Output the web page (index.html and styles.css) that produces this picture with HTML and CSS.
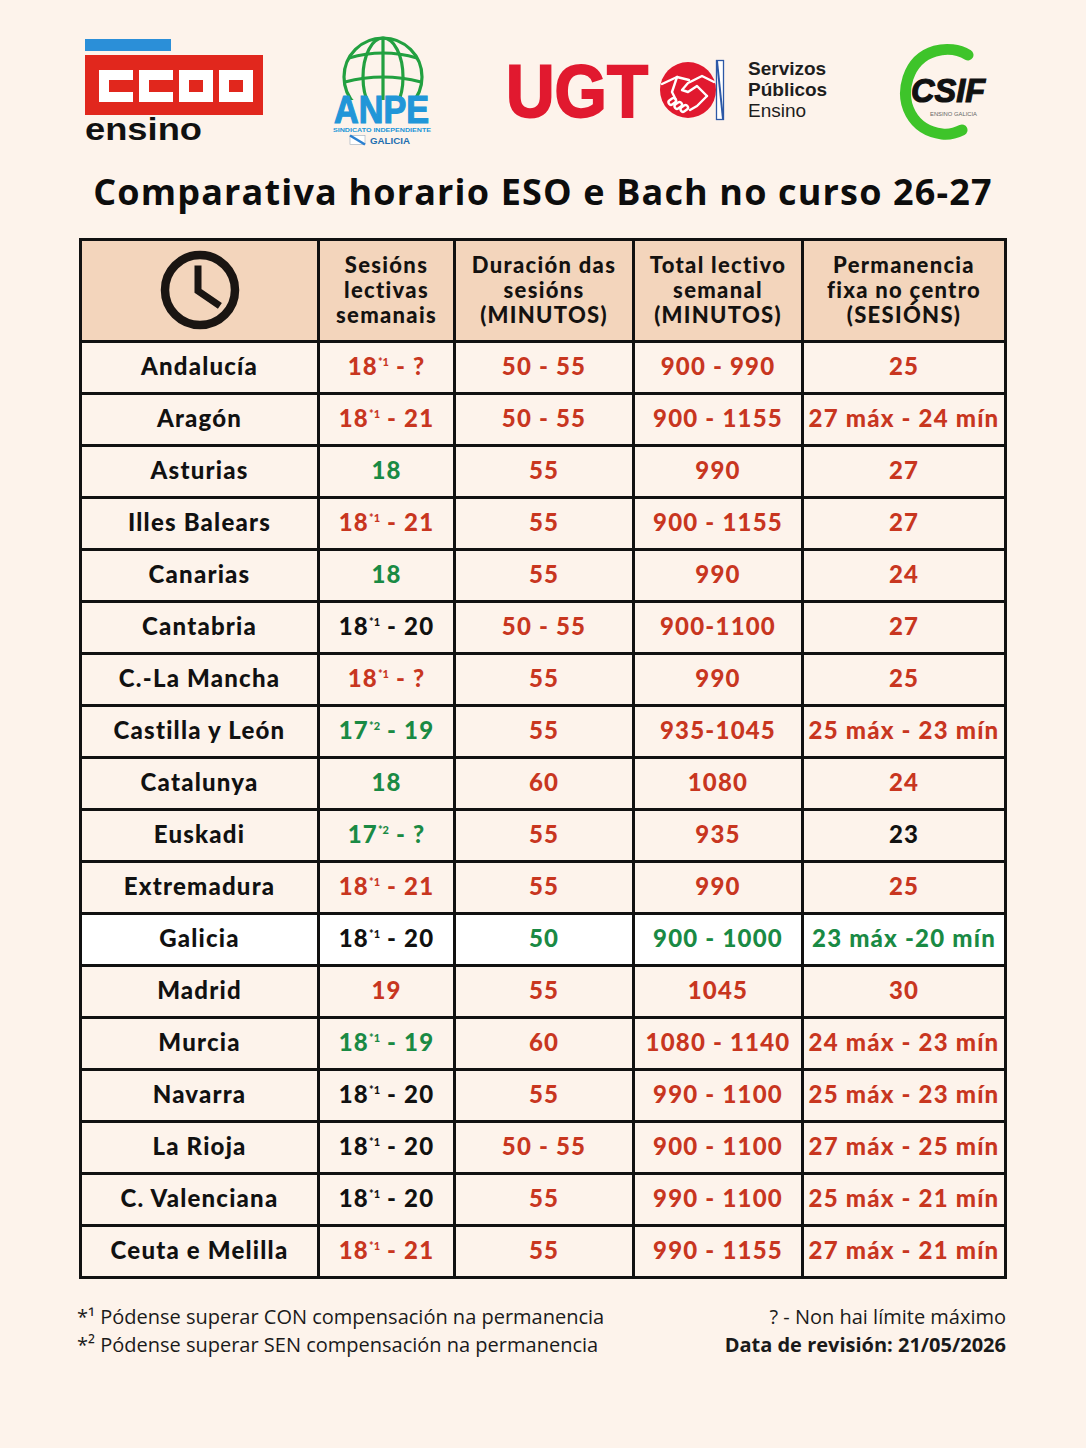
FILE: index.html
```html
<!DOCTYPE html>
<html lang="gl">
<head>
<meta charset="utf-8">
<title>Comparativa horario ESO e Bach no curso 26-27</title>
<link rel="stylesheet" href="styles.css">
</head>
<body>
<header class="logos">
  <svg class="logo logo-ccoo" width="180" height="120" viewBox="85 30 180 120" aria-label="CCOO ensino">
    <rect x="85" y="39" width="86" height="12" fill="#2b8fd8"/>
    <rect x="85" y="55" width="178" height="60" fill="#e1271d"/>
    <g fill="#fff">
      <path d="M99 70 h34 v10 h-24 v12 h24 v10 h-34 z"/>
      <path d="M139 70 h34 v10 h-24 v12 h24 v10 h-34 z"/>
      <path d="M179 70 h34 v32 h-34 z M189 80 v12 h14 v-12 z" fill-rule="evenodd"/>
      <path d="M219 70 h34 v32 h-34 z M229 80 v12 h14 v-12 z" fill-rule="evenodd"/>
    </g>
    <text x="85" y="140" class="t-ensino" textLength="117" lengthAdjust="spacingAndGlyphs">ensino</text>
  </svg>

  <svg class="logo logo-anpe" width="106" height="120" viewBox="328 30 106 120" aria-label="ANPE Galicia">
    <g fill="none" stroke="#22a040" stroke-width="3.2">
      <circle cx="383" cy="77" r="39"/>
      <ellipse cx="383" cy="77" rx="20" ry="39"/>
      <line x1="383" y1="38" x2="383" y2="116"/>
      <path d="M349 58 Q383 48 417 58"/>
      <path d="M345 82 Q383 72 421 82"/>
    </g>
    <rect x="328" y="100" width="106" height="50" fill="#fdf3eb"/>
    <text x="334" y="123" class="t-anpe" textLength="95" lengthAdjust="spacingAndGlyphs">ANPE</text>
    <text x="333" y="132" class="t-sind" textLength="98" lengthAdjust="spacingAndGlyphs">SINDICATO INDEPENDIENTE</text>
    <rect x="350" y="135.5" width="15" height="9" fill="#fff" stroke="#9ab" stroke-width="0.6"/>
    <path d="M350 135.5 L365 144.5" stroke="#2a7fd0" stroke-width="2.5"/>
    <text x="370" y="144" class="t-gal" textLength="40" lengthAdjust="spacingAndGlyphs">GALICIA</text>
  </svg>

  <svg class="logo logo-ugt" width="322" height="120" viewBox="505 30 322 120" aria-label="UGT Servizos Públicos Ensino">
    <text x="506" y="117" class="t-ugt" textLength="142" lengthAdjust="spacingAndGlyphs">UGT</text>
    <circle cx="688" cy="90" r="28" fill="#e1192f"/>
    <g fill="none" stroke="#fff" stroke-width="2.4" stroke-linecap="round" stroke-linejoin="round">
      <path d="M662 84 L677 77 L689 80"/>
      <path d="M714 82 L702 76 L688 83 L682 90 L688 92 L697 86 L707 96"/>
      <path d="M677 77 L672 92 L676 100"/>
      <path d="M707 96 L697 106 L690 110"/>
      <rect x="668" y="99" width="8" height="5" rx="2.5" transform="rotate(-35 672 101)"/>
      <rect x="674" y="103" width="8" height="5" rx="2.5" transform="rotate(-35 678 105)"/>
      <rect x="680" y="106" width="8" height="5" rx="2.5" transform="rotate(-35 684 108)"/>
    </g>
    <rect x="716.5" y="60.5" width="7" height="59" fill="#fff" stroke="#2c58a6" stroke-width="1.3"/>
    <path d="M717 61 L723 119" stroke="#2c58a6" stroke-width="2"/>
    <text x="748" y="75" class="t-sp b">Servizos</text>
    <text x="748" y="96" class="t-sp b">Públicos</text>
    <text x="748" y="117" class="t-sp">Ensino</text>
  </svg>

  <svg class="logo logo-csif" width="106" height="120" viewBox="896 30 106 120" aria-label="CSIF Ensino Galicia">
    <path d="M968 55 C950 44 918 48 908 78 C900 103 912 130 942 134 C950 135 956 133 962 130" fill="none" stroke="#3ec42a" stroke-width="11" stroke-linecap="round"/>
    <text x="911" y="102" class="t-csif" textLength="74" lengthAdjust="spacingAndGlyphs">CSIF</text>
    <text x="930" y="116" class="t-csifsub" textLength="47" lengthAdjust="spacingAndGlyphs">ENSINO GALICIA</text>
  </svg>
</header>

<h1 class="title">Comparativa horario ESO e Bach no curso 26-27</h1>

<table class="grid">
  <colgroup>
    <col class="c1"><col class="c2"><col class="c3"><col class="c4"><col class="c5">
  </colgroup>
  <thead>
    <tr>
      <th class="clock-cell">
        <svg width="82" height="82" viewBox="0 0 82 82" aria-hidden="true">
          <circle cx="41" cy="41" r="35" fill="none" stroke="#1a1512" stroke-width="8.5"/>
          <path d="M39 20 V42 L58 55" fill="none" stroke="#1a1512" stroke-width="7" stroke-linecap="square"/>
        </svg>
      </th>
      <th>Sesións<br>lectivas<br>semanais</th>
      <th>Duración das<br>sesións<br>(MINUTOS)</th>
      <th>Total lectivo<br>semanal<br>(MINUTOS)</th>
      <th>Permanencia<br>fixa no çentro<br>(SESIÓNS)</th>
    </tr>
  </thead>
  <tbody>
    <tr><td>Andalucía</td><td class="r">18<sup>*1</sup> - ?</td><td class="r">50 - 55</td><td class="r">900 - 990</td><td class="r">25</td></tr>
    <tr><td>Aragón</td><td class="r">18<sup>*1</sup> - 21</td><td class="r">50 - 55</td><td class="r">900 - 1155</td><td class="r">27 máx - 24 mín</td></tr>
    <tr><td>Asturias</td><td class="g">18</td><td class="r">55</td><td class="r">990</td><td class="r">27</td></tr>
    <tr><td>Illes Balears</td><td class="r">18<sup>*1</sup> - 21</td><td class="r">55</td><td class="r">900 - 1155</td><td class="r">27</td></tr>
    <tr><td>Canarias</td><td class="g">18</td><td class="r">55</td><td class="r">990</td><td class="r">24</td></tr>
    <tr><td>Cantabria</td><td>18<sup>*1</sup> - 20</td><td class="r">50 - 55</td><td class="r">900-1100</td><td class="r">27</td></tr>
    <tr><td>C.-La Mancha</td><td class="r">18<sup>*1</sup> - ?</td><td class="r">55</td><td class="r">990</td><td class="r">25</td></tr>
    <tr><td>Castilla y León</td><td class="g">17<sup>*2</sup> - 19</td><td class="r">55</td><td class="r">935-1045</td><td class="r">25 máx - 23 mín</td></tr>
    <tr><td>Catalunya</td><td class="g">18</td><td class="r">60</td><td class="r">1080</td><td class="r">24</td></tr>
    <tr><td>Euskadi</td><td class="g">17<sup>*2</sup> - ?</td><td class="r">55</td><td class="r">935</td><td>23</td></tr>
    <tr><td>Extremadura</td><td class="r">18<sup>*1</sup> - 21</td><td class="r">55</td><td class="r">990</td><td class="r">25</td></tr>
    <tr class="hl"><td>Galicia</td><td>18<sup>*1</sup> - 20</td><td class="g">50</td><td class="g">900 - 1000</td><td class="g">23 máx -20 mín</td></tr>
    <tr><td>Madrid</td><td class="r">19</td><td class="r">55</td><td class="r">1045</td><td class="r">30</td></tr>
    <tr><td>Murcia</td><td class="g">18<sup>*1</sup> - 19</td><td class="r">60</td><td class="r">1080 - 1140</td><td class="r">24 máx - 23 mín</td></tr>
    <tr><td>Navarra</td><td>18<sup>*1</sup> - 20</td><td class="r">55</td><td class="r">990 - 1100</td><td class="r">25 máx - 23 mín</td></tr>
    <tr><td>La Rioja</td><td>18<sup>*1</sup> - 20</td><td class="r">50 - 55</td><td class="r">900 - 1100</td><td class="r">27 máx - 25 mín</td></tr>
    <tr><td>C. Valenciana</td><td>18<sup>*1</sup> - 20</td><td class="r">55</td><td class="r">990 - 1100</td><td class="r">25 máx - 21 mín</td></tr>
    <tr><td>Ceuta e Melilla</td><td class="r">18<sup>*1</sup> - 21</td><td class="r">55</td><td class="r">990 - 1155</td><td class="r">27 máx - 21 mín</td></tr>
  </tbody>
</table>

<footer class="notes">
  <div class="notes-left">
    <p>*¹ Pódense superar CON compensación na permanencia</p>
    <p>*² Pódense superar SEN compensación na permanencia</p>
  </div>
  <div class="notes-right">
    <p>? - Non hai límite máximo</p>
    <p class="bold">Data de revisión: 21/05/2026</p>
  </div>
</footer>
</body>
</html>
```

FILE: styles.css
```css
* { box-sizing: border-box; }

html, body {
  margin: 0;
  padding: 0;
  background: #fdf3eb;
}

body {
  width: 1086px;
  min-height: 1448px;
  font-family: "Lato", "Noto Sans", sans-serif;
  color: #121212;
}

.logos {
  display: flex;
  align-items: flex-start;
  height: 150px;
  padding-top: 30px;
}

.logo { display: block; flex: none; }
.logo-ccoo { margin-left: 85px; }
.logo-anpe { margin-left: 63px; }
.logo-ugt { margin-left: 71px; }
.logo-csif { margin-left: 69px; }

.t-ensino {
  font-family: "Liberation Sans", Arial, sans-serif;
  font-weight: 700;
  font-size: 31px;
  fill: #111;
}
.t-anpe {
  font-family: "Liberation Sans", Arial, sans-serif;
  font-weight: 700;
  font-size: 38px;
  fill: #2196d8;
  stroke: #2196d8;
  stroke-width: 1.2px;
}
.t-sind {
  font-family: "Liberation Sans", Arial, sans-serif;
  font-weight: 700;
  font-size: 6px;
  fill: #2196d8;
}
.t-gal {
  font-family: "Liberation Sans", Arial, sans-serif;
  font-weight: 700;
  font-size: 9px;
  fill: #1e6fb0;
}
.t-ugt {
  font-family: "Liberation Sans", Arial, sans-serif;
  font-weight: 700;
  font-size: 74px;
  fill: #e1192f;
  stroke: #e1192f;
  stroke-width: 2px;
}
.t-sp {
  font-family: "Liberation Sans", Arial, sans-serif;
  font-size: 19px;
  fill: #1d1d1d;
}
.t-sp.b { font-weight: 700; }
.t-csif {
  font-family: "Liberation Sans", Arial, sans-serif;
  font-weight: 700;
  font-style: italic;
  font-size: 34px;
  fill: #111;
  stroke: #111;
  stroke-width: 1.2px;
}
.t-csifsub {
  font-family: "Liberation Sans", Arial, sans-serif;
  font-size: 5px;
  fill: #666;
}

.title {
  margin: 22px 0 0;
  height: 40px;
  font-family: "Open Sans", "Noto Sans", sans-serif;
  font-weight: 700;
  font-size: 36px;
  line-height: 40px;
  text-align: center;
  color: #0d0d0d;
  letter-spacing: 1.15px;
}

.grid {
  margin: 26px 0 0 79px;
  width: 925px;
  border-collapse: collapse;
  table-layout: fixed;
  font-family: "Lato", "Noto Sans", sans-serif;
  font-weight: 900;
  font-size: 24px;
  letter-spacing: 1.2px;
}

.c1 { width: 238px; }
.c2 { width: 136px; }
.c3 { width: 179px; }
.c4 { width: 169px; }
.c5 { width: 203px; }

.grid th,
.grid td {
  border: 3px solid #111;
  text-align: center;
  vertical-align: middle;
  padding: 0;
}

.grid th {
  background: #f3d5bc;
  height: 102px;
  font-size: 22px;
  line-height: 25px;
  letter-spacing: 1.3px;
  font-weight: 900;
  color: #141210;
  padding-bottom: 2px;
}

.clock-cell svg { display: block; margin: 0 auto; }

.grid td {
  height: 52px;
  background: #fdf3eb;
  color: #111;
  padding-bottom: 4px;
}

.grid tr.hl td { background: #ffffff; }

.grid td.r { color: #c8361f; }
.grid td.g { color: #1a8a44; }

.grid sup {
  font-size: 11px;
  vertical-align: 9px;
  line-height: 0;
  letter-spacing: 0;
}

.notes {
  display: flex;
  justify-content: space-between;
  margin: 24px 80px 0 77px;
  font-family: "Open Sans", "Noto Sans", sans-serif;
  font-size: 20px;
  line-height: 28px;
  color: #1a1a1a;
  letter-spacing: 0;
}

.notes p { margin: 0; }
.notes-right { text-align: right; }
.notes .bold { font-weight: 700; }
```
